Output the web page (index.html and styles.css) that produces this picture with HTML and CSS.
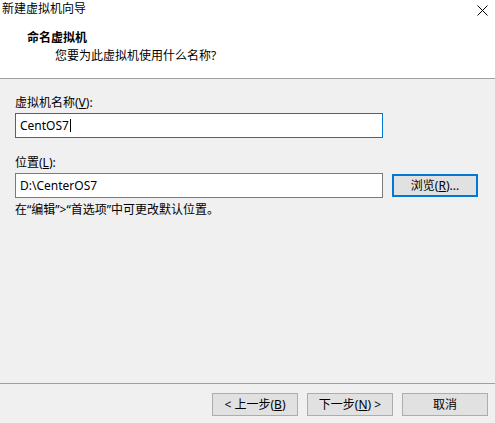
FILE: index.html
```html
<!DOCTYPE html>
<html lang="zh-CN">
<head>
<meta charset="utf-8">
<title>新建虚拟机向导</title>
<link rel="stylesheet" href="styles.css">
</head>
<body>
<div class="window">
  <header class="header">
    <div class="titlebar">
      <span class="title">新建虚拟机向导</span>
      <svg class="close" width="11" height="11" viewBox="0 0 11 11" aria-label="关闭">
        <path d="M0.5 0.5 L10.5 10.5 M10.5 0.5 L0.5 10.5" stroke="#000" stroke-width="1" fill="none"/>
      </svg>
    </div>
    <div class="heading">命名虚拟机</div>
    <div class="subheading">您要为此虚拟机使用什么名称?</div>
  </header>
  <main class="content">
    <div class="label">虚拟机名称(<u>V</u>):</div>
    <div class="field focused" role="textbox">CentOS7<span class="caret"></span></div>
    <div class="label label-second">位置(<u>L</u>):</div>
    <div class="row">
      <div class="field" role="textbox">D:\CenterOS7</div>
      <button class="btn browse">浏览(<u>R</u>)...</button>
    </div>
    <div class="hint">在“编辑”&gt;“首选项”中可更改默认位置。</div>
  </main>
  <footer class="footer">
    <button class="btn">&lt; 上一步(<u>B</u>)</button>
    <button class="btn">下一步(<u>N</u>) &gt;</button>
    <button class="btn">取消</button>
  </footer>
</div>
</body>
</html>
```
FILE: styles.css
```css
* { box-sizing: border-box; }
html, body {
  margin: 0;
  padding: 0;
}
body {
  width: 495px;
  height: 423px;
  background: #f0f0f0;
  font-family: "Noto Sans", "Noto Sans CJK SC", sans-serif;
  font-size: 12px;
  line-height: 16px;
  color: #000;
  overflow: hidden;
}
.window {
  display: flex;
  flex-direction: column;
  height: 423px;
}
.header {
  background: #fff;
  height: 79px;
  border-bottom: 1px solid #a0a0a0;
  display: flex;
  flex-direction: column;
}
.titlebar {
  height: 20px;
  display: flex;
  justify-content: space-between;
  align-items: flex-start;
  padding: 1px 7px 0 2px;
}
.close {
  margin-top: 4px;
}
.heading {
  margin-top: 10px;
  padding-left: 27px;
  font-weight: bold;
}
.subheading {
  margin-top: 2px;
  padding-left: 55px;
}
.content {
  flex: 1;
  padding: 16px 0 0 15px;
  display: flex;
  flex-direction: column;
  align-items: flex-start;
}
.label-second {
  margin-top: 17px;
}
.field {
  margin-top: 2px;
  width: 368px;
  height: 25px;
  background: #fff;
  border: 1px solid #7a7a7a;
  padding: 0 4px;
  display: flex;
  align-items: center;
  white-space: nowrap;
}
.field.focused {
  border-color: #0078d7;
}
.caret {
  display: inline-block;
  width: 1px;
  height: 13px;
  background: #000;
  margin-left: 1px;
}
.row {
  display: flex;
  align-items: center;
  gap: 9px;
}
.btn {
  font: inherit;
  color: #000;
  width: 86px;
  height: 23px;
  padding: 0;
  background: #e1e1e1;
  border: 1px solid #adadad;
  border-radius: 0;
  display: flex;
  align-items: center;
  justify-content: center;
}
.browse {
  margin-top: 2px;
  border: 2px solid #0078d7;
}
.hint {
  margin-top: 4px;
}
u {
  text-underline-offset: 1px;
}
.footer {
  border-top: 1px solid #a0a0a0;
  height: 40px;
  display: flex;
  justify-content: flex-end;
  align-items: flex-start;
  gap: 9px;
  padding: 9px 7px 0 0;
}
```
